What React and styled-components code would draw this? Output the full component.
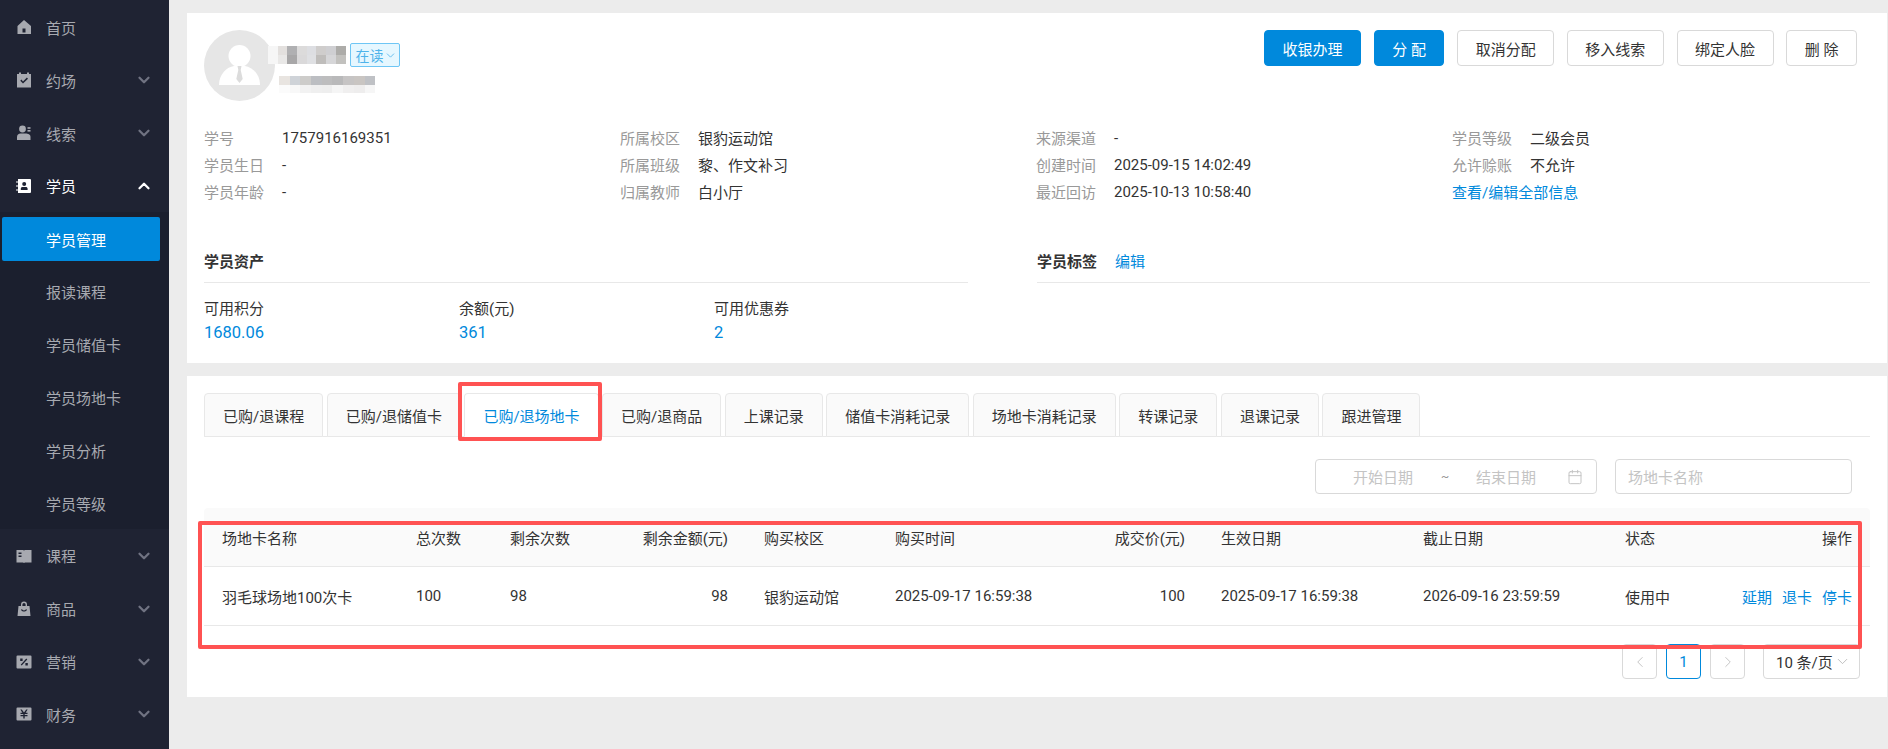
import React from "react";
import styled, { createGlobalStyle } from "styled-components";
import { ChevronDown, ChevronUp, ChevronLeft, ChevronRight, Calendar } from "lucide-react";

const BLUE = "#0089dc";

const GlobalStyle = createGlobalStyle`
  html, body { margin: 0; padding: 0; height: 100%; }
  body {
    background: #ececec;
    color: #333;
    font-family: Roboto, "Noto Sans CJK SC", sans-serif;
    font-size: 15px;
    overflow: hidden;
  }
  * { box-sizing: border-box; }
`;

const HomeIcon = () => (
  <svg width="16" height="16" viewBox="0 0 16 16">
    <path fill="currentColor" fillRule="evenodd" d="M8 1 L15 7 V15 H1.5 V7 Z M6.5 9.5 V13.5 H9.5 V9.5 Z" />
  </svg>
);
const CalendarCheckIcon = () => (
  <svg width="16" height="16" viewBox="0 0 16 16">
    <path fill="currentColor" fillRule="evenodd" d="M3 .5h2v1.5h6V.5h2V2h2v13.5H1V2h2z M4.3 8.7 L7 11.6 L12 6.7 L10.9 5.6 L7 9.4 L5.4 7.6 Z" />
  </svg>
);
const PersonIcon = () => (
  <svg width="16" height="16" viewBox="0 0 16 16">
    <circle cx="6.5" cy="4" r="3.4" fill="currentColor" />
    <path fill="currentColor" d="M1 15v-3c0-2 1.500-3.400 3.500-3.400h5c2.500 0 5 1 5 3.400v3z" />
    <rect x="11.500" y="2.200" width="3" height="1.600" fill="currentColor" />
    <rect x="11.500" y="5" width="3" height="1.600" fill="currentColor" />
  </svg>
);
const ContactIcon = () => (
  <svg width="16" height="16" viewBox="0 0 16 16">
    <path fill="currentColor" fillRule="evenodd" d="M2 1h12a1 1 0 0 1 1 1v12a1 1 0 0 1-1 1H2zM8.200 4a2 2 0 1 0 0 4a2 2 0 0 0 0-4zM4.800 12h6.800v-1.300c0-1-.8-1.700-1.800-1.700H6.600c-1 0-1.800.7-1.800 1.700z" />
    <rect x=".5" y="3" width="1" height="2" fill="currentColor" />
    <rect x=".5" y="7" width="1" height="2" fill="currentColor" />
    <rect x=".5" y="11" width="1" height="2" fill="currentColor" />
  </svg>
);
const BookIcon = () => (
  <svg width="16" height="16" viewBox="0 0 16 16">
    <path fill="currentColor" fillRule="evenodd" d="M.5 2h6.800L8 2.800 8.700 2h6.800v12.500H9L8 15l-1-.5H.5zM2.500 4.500v1.500h3V4.500zM2.500 7.500v1.500h3V7.500z" />
  </svg>
);
const BagIcon = () => (
  <svg width="16" height="16" viewBox="0 0 16 16">
    <path fill="currentColor" fillRule="evenodd" d="M5 5V3.500a3 3 0 0 1 6 0V5h2.500L14.500 15H1.500L2.500 5zM6.400 5h3.200V3.500a1.600 1.600 0 0 0-3.200 0zM5 8.500c.6 2.800 5.400 2.800 6 0l-1.100-.2c-.6 1.500-3.200 1.500-3.800 0z" />
  </svg>
);
const PercentIcon = () => (
  <svg width="16" height="16" viewBox="0 0 16 16">
    <path fill="currentColor" fillRule="evenodd" d="M1.500 1.500h13a1 1 0 0 1 1 1v11a1 1 0 0 1-1 1h-13a1 1 0 0 1-1-1v-11a1 1 0 0 1 1-1zM10.300 4.500L4.700 10.700l1 .9 5.600-6.200zM4.200 4.500v2.400h2.400V4.500zM9.400 9.100v2.400h2.400V9.100z" />
  </svg>
);
const YenIcon = () => (
  <svg width="16" height="16" viewBox="0 0 16 16">
    <path fill="currentColor" fillRule="evenodd" d="M1.500 1.500h13a1 1 0 0 1 1 1v11a1 1 0 0 1-1 1h-13a1 1 0 0 1-1-1v-11a1 1 0 0 1 1-1zM4.300 3.500L6.400 6.800H4.500V8h2.800v1H4.500v1.200h2.800v2.300h1.400v-2.300h2.800V9H8.700V8h2.800V6.800H9.600l2.100-3.300h-1.500L8 6.500 5.800 3.500z" />
  </svg>
);

const menuTop = [
  { label: "首页", icon: <HomeIcon /> },
  { label: "约场", icon: <CalendarCheckIcon />, arrow: true },
  { label: "线索", icon: <PersonIcon />, arrow: true },
];
const subMenu = ["学员管理", "报读课程", "学员储值卡", "学员场地卡", "学员分析", "学员等级"];
const menuBottom = [
  { label: "课程", icon: <BookIcon /> },
  { label: "商品", icon: <BagIcon /> },
  { label: "营销", icon: <PercentIcon /> },
  { label: "财务", icon: <YenIcon /> },
];

const actions = [
  { label: "收银办理", primary: true },
  { label: "分 配", primary: true },
  { label: "取消分配" },
  { label: "移入线索" },
  { label: "绑定人脸" },
  { label: "删 除" },
];

const info = [
  ["学号", "1757916169351"],
  ["所属校区", "银豹运动馆"],
  ["来源渠道", "-"],
  ["学员等级", "二级会员"],
  ["学员生日", "-"],
  ["所属班级", "黎、作文补习"],
  ["创建时间", "2025-09-15 14:02:49"],
  ["允许赊账", "不允许"],
  ["学员年龄", "-"],
  ["归属教师", "白小厅"],
  ["最近回访", "2025-10-13 10:58:40"],
];

const tabs = [
  "已购/退课程",
  "已购/退储值卡",
  "已购/退场地卡",
  "已购/退商品",
  "上课记录",
  "储值卡消耗记录",
  "场地卡消耗记录",
  "转课记录",
  "退课记录",
  "跟进管理",
];

const columns = [
  { title: "场地卡名称", value: "羽毛球场地100次卡" },
  { title: "总次数", value: "100" },
  { title: "剩余次数", value: "98" },
  { title: "剩余金额(元)", value: "98", right: true },
  { title: "购买校区", value: "银豹运动馆" },
  { title: "购买时间", value: "2025-09-17 16:59:38" },
  { title: "成交价(元)", value: "100", right: true },
  { title: "生效日期", value: "2025-09-17 16:59:38" },
  { title: "截止日期", value: "2026-09-16 23:59:59" },
  { title: "状态", value: "使用中" },
];

const nameMosaic = [
  "#f6f6f6", "#e3e0de", "#b0b0b2", "#dcdbdb", "#dddee2", "#cfcdcc", "#cfcfd2", "#adaca9",
  "#f6f6f6", "#e9e8e7", "#a8a7a8", "#dad9da", "#dfe0e3", "#bfbdbb", "#d6d6d8", "#c2c1be",
];
const phoneMosaic = [
  "#e8e4e0", "#cfd3d8", "#cdccca", "#bcbec2", "#bdbdbe", "#b9b9ba", "#c6c4c4", "#c9c5c2", "#bfc1c5",
  "#fbfbfb", "#f8f8f8", "#f2f2f2", "#efefef", "#eeeeee", "#f5f5f5", "#f0efef", "#eeeded", "#f6f6f6",
];

const App = () => {
  return (
    <Page>
      <GlobalStyle />
      <Sidebar>
        {menuTop.map((m) => (
          <MenuItem key={m.label}>
            <MenuIcon>{m.icon}</MenuIcon>
            <MenuLabel>{m.label}</MenuLabel>
            {m.arrow && <ChevronDown size={18} strokeWidth={3} />}
          </MenuItem>
        ))}
        <MenuItem $open>
          <MenuIcon><ContactIcon /></MenuIcon>
          <MenuLabel>学员</MenuLabel>
          <ChevronUp size={18} strokeWidth={3} />
        </MenuItem>
        <SubMenu>
          {subMenu.map((s, i) => (
            <SubItem key={s} $active={i === 0}>
              <SubLabel $active={i === 0}>{s}</SubLabel>
            </SubItem>
          ))}
        </SubMenu>
        {menuBottom.map((m) => (
          <MenuItem key={m.label}>
            <MenuIcon>{m.icon}</MenuIcon>
            <MenuLabel>{m.label}</MenuLabel>
            <ChevronDown size={18} strokeWidth={3} />
          </MenuItem>
        ))}
      </Sidebar>

      <Main>
        <Card>
          <ProfileHead>
            <Profile>
              <Avatar width="71" height="71" viewBox="0 0 71 71">
                <circle cx="35.500" cy="35.500" r="35.500" fill="#e6e6e6" />
                <circle cx="35.500" cy="26" r="11" fill="#fff" />
                <path fill="#fff" d="M15 55c0-11 8-18 15-19h11c7 1 15 8 15 19z" />
                <path fill="#dcdcdc" d="M33.500 36h4l-.8 4 2 9-3.200 4-3.200-4 2-9z" />
              </Avatar>
              <NameBlock>
                <NameRow>
                  <Mosaic $cols={8} $cell={9.7} $rowH={9}>
                    {nameMosaic.map((c, i) => <MosaicCell key={i} $color={c} />)}
                  </Mosaic>
                  <StatusTag>在读<ChevronDown size={13} strokeWidth={1.5} /></StatusTag>
                </NameRow>
                <Mosaic $cols={9} $cell={10.7} $rowH={8.500} $indent={11}>
                  {phoneMosaic.map((c, i) => <MosaicCell key={i} $color={c} />)}
                </Mosaic>
              </NameBlock>
            </Profile>
            <Actions>
              {actions.map((a) => (
                <ActionButton key={a.label} $primary={a.primary}>{a.label}</ActionButton>
              ))}
            </Actions>
          </ProfileHead>

          <InfoGrid>
            {info.map(([label, value]) => (
              <InfoItem key={label}>
                <InfoLabel>{label}</InfoLabel>
                <span>{value}</span>
              </InfoItem>
            ))}
            <InfoLink>查看/编辑全部信息</InfoLink>
          </InfoGrid>

          <Sections>
            <Section>
              <SectionTitle><strong>学员资产</strong></SectionTitle>
              <Assets>
                <div>
                  <AssetLabel>可用积分</AssetLabel>
                  <AssetValue>1680.06</AssetValue>
                </div>
                <div>
                  <AssetLabel>余额(元)</AssetLabel>
                  <AssetValue>361</AssetValue>
                </div>
                <div>
                  <AssetLabel>可用优惠券</AssetLabel>
                  <AssetValue>2</AssetValue>
                </div>
              </Assets>
            </Section>
            <Section>
              <SectionTitle>
                <strong>学员标签</strong>
                <EditLink>编辑</EditLink>
              </SectionTitle>
            </Section>
          </Sections>
        </Card>

        <Card>
          <TabBar>
            {tabs.map((t, i) => (
              <Tab key={t} $active={i === 2}>
                {t}
                {i === 2 && <TabMark />}
              </Tab>
            ))}
          </TabBar>

          <Filters>
            <DateRange>
              <DateText>开始日期</DateText>
              <Tilde>~</Tilde>
              <DateText>结束日期</DateText>
              <Calendar size={16} strokeWidth={1.5} />
            </DateRange>
            <NameInput>场地卡名称</NameInput>
          </Filters>

          <TableWrap>
            <TableHead>
              {columns.map((c) => (
                <Cell key={c.title} $right={c.right}>{c.title}</Cell>
              ))}
              <Cell $right>操作</Cell>
            </TableHead>
            <TableRow>
              {columns.map((c) => (
                <Cell key={c.title} $right={c.right}>{c.value}</Cell>
              ))}
              <OpsCell>
                <a>延期</a>
                <a>退卡</a>
                <a>停卡</a>
              </OpsCell>
            </TableRow>
            <TableMark />
          </TableWrap>

          <Pager>
            <PageButton $muted><ChevronLeft size={18} strokeWidth={1.3} /></PageButton>
            <PageButton $current>1</PageButton>
            <PageButton $muted><ChevronRight size={18} strokeWidth={1.3} /></PageButton>
            <PageSize>10 条/页<ChevronDown size={17} strokeWidth={1.2} /></PageSize>
          </Pager>
        </Card>
      </Main>
    </Page>
  );
};

const Page = styled.div`
  display: flex;
  height: 749px;
  overflow: hidden;
`;

const Sidebar = styled.aside`
  width: 169px;
  flex: none;
  padding-top: 1px;
  background: #1f2333;
  color: #a7a9b0;
`;

const MenuItem = styled.div`
  display: flex;
  align-items: center;
  height: 52.85px;
  padding: 0 16px 0 16px;
  color: ${(p) => (p.$open ? "#fff" : "#a7a9b0")};
  & > svg {
    color: ${(p) => (p.$open ? "#fff" : "#707382")};
  }
`;

const MenuIcon = styled.span`
  display: flex;
  width: 30px;
  color: inherit;
  svg { display: block; }
`;

const MenuLabel = styled.span`
  flex: 1;
`;

const SubMenu = styled.div`
  background: #1b1f2e;
`;

const SubItem = styled.div`
  height: 52.85px;
  padding: ${(p) => (p.$active ? "5px 9px 4px 2px" : "0")};
`;

const SubLabel = styled.div`
  display: flex;
  align-items: center;
  height: 100%;
  padding-left: ${(p) => (p.$active ? "44px" : "46px")};
  border-radius: 2px;
  color: ${(p) => (p.$active ? "#fff" : "#a7a9b0")};
  background: ${(p) => (p.$active ? BLUE : "transparent")};
`;

const Main = styled.main`
  flex: 1;
  min-width: 0;
  padding: 13px 1px 0 18px;
  display: flex;
  flex-direction: column;
  gap: 13px;
`;

const Card = styled.section`
  background: #fff;
  padding: 17px 17px 18px;
`;

const ProfileHead = styled.div`
  display: flex;
  justify-content: space-between;
  align-items: flex-start;
  height: 71px;
  padding-right: 13px;
`;

const Profile = styled.div`
  display: flex;
`;

const Avatar = styled.svg`
  display: block;
  flex: none;
`;

const NameBlock = styled.div`
  margin-left: -7px;
  padding-top: 13px;
  display: flex;
  flex-direction: column;
`;

const NameRow = styled.div`
  display: flex;
  align-items: flex-start;
  gap: 4px;
  height: 30px;
`;

const Mosaic = styled.div`
  display: grid;
  grid-template-columns: repeat(${(p) => p.$cols}, ${(p) => p.$cell}px);
  grid-auto-rows: ${(p) => p.$rowH}px;
  margin-left: ${(p) => p.$indent || 0}px;
  margin-top: 3px;
`;

const MosaicCell = styled.i`
  display: block;
  background: ${(p) => p.$color};
`;

const StatusTag = styled.span`
  display: inline-flex;
  align-items: center;
  height: 24px;
  width: 50px;
  padding-left: 5px;
  border: 1px solid #6ec6f5;
  border-radius: 2px;
  background: #e6f7ff;
  color: #4fb3ea;
  font-size: 14px;
  flex: none;
`;

const Actions = styled.div`
  display: flex;
  gap: 12.7px;
`;

const ActionButton = styled.button`
  height: 36px;
  padding: 0 17.5px;
  border: 1px solid ${(p) => (p.$primary ? BLUE : "#d9d9d9")};
  border-radius: 4px;
  background: ${(p) => (p.$primary ? BLUE : "#fff")};
  color: ${(p) => (p.$primary ? "#fff" : "#333")};
  font: inherit;
`;

const InfoGrid = styled.div`
  display: grid;
  grid-template-columns: repeat(4, 416px);
  grid-auto-rows: 27px;
  margin-top: 23px;
`;

const InfoItem = styled.div`
  display: flex;
  align-items: center;
`;

const InfoLabel = styled.span`
  width: 78px;
  color: #999;
`;

const InfoLink = styled.a`
  display: flex;
  align-items: center;
  color: ${BLUE};
`;

const Sections = styled.div`
  display: grid;
  grid-template-columns: 833px 1fr;
  margin-top: 34px;
`;

const Section = styled.div`
  &:first-child { padding-right: 69px; }
`;

const SectionTitle = styled.div`
  display: flex;
  align-items: center;
  gap: 18px;
  height: 44px;
  border-bottom: 1px solid #e8e8e8;
  strong { font-weight: 700; }
`;

const EditLink = styled.a`
  color: ${BLUE};
`;

const Assets = styled.div`
  display: grid;
  grid-template-columns: repeat(3, 255px);
  padding-top: 14px;
`;

const AssetLabel = styled.div`
  line-height: 24px;
`;

const AssetValue = styled.div`
  line-height: 24px;
  font-size: 16.5px;
  color: ${BLUE};
`;

const TabBar = styled.div`
  display: flex;
  height: 44px;
  border-bottom: 1px solid #e8e8e8;
`;

const Tab = styled.div`
  position: relative;
  display: flex;
  align-items: center;
  height: 44px;
  padding: 0 18px;
  margin-right: 3.5px;
  border: 1px solid #e8e8e8;
  border-bottom-color: ${(p) => (p.$active ? "#fff" : "#e8e8e8")};
  border-radius: 4px 4px 0 0;
  background: ${(p) => (p.$active ? "#fff" : "#fafafa")};
  color: ${(p) => (p.$active ? BLUE : "#333")};
`;

const TabMark = styled.span`
  position: absolute;
  left: -7px;
  right: -4px;
  top: -12px;
  bottom: -5px;
  border: 4px solid #ff5252;
  border-radius: 2px;
`;

const Filters = styled.div`
  display: flex;
  justify-content: flex-end;
  gap: 18px;
  margin-top: 22px;
  padding-right: 18px;
`;

const DateRange = styled.div`
  display: flex;
  align-items: center;
  width: 282px;
  height: 35px;
  padding-left: 37px;
  border: 1px solid #d9d9d9;
  border-radius: 4px;
  color: #c4c4c4;
  svg { margin-left: 30px; }
`;

const DateText = styled.span`
  width: 61px;
  white-space: nowrap;
`;

const Tilde = styled.span`
  width: 62px;
  text-align: center;
  color: #999;
  font-size: 12px;
`;

const NameInput = styled.div`
  display: flex;
  align-items: center;
  width: 237px;
  height: 35px;
  padding-left: 12px;
  border: 1px solid #d9d9d9;
  border-radius: 4px;
  color: #c4c4c4;
`;

const TableWrap = styled.div`
  position: relative;
  margin-top: 14px;
`;

const tableGrid = "194px 94px 130px 124px 131px 183px 143px 202px 202px 113px 150px";

const TableHead = styled.div`
  display: grid;
  grid-template-columns: ${tableGrid};
  height: 59px;
  align-items: center;
  background: #fafafa;
  border-bottom: 1px solid #e8e8e8;
  border-radius: 4px 4px 0 0;
`;

const TableRow = styled.div`
  display: grid;
  grid-template-columns: ${tableGrid};
  height: 59px;
  align-items: center;
  border-bottom: 1px solid #e8e8e8;
`;

const Cell = styled.div`
  padding: 0 18px;
  white-space: nowrap;
  text-align: ${(p) => (p.$right ? "right" : "left")};
`;

const OpsCell = styled.div`
  display: flex;
  justify-content: flex-end;
  gap: 10px;
  padding-right: 18px;
  color: ${BLUE};
`;

const TableMark = styled.span`
  position: absolute;
  left: -6px;
  right: 8px;
  top: 13px;
  bottom: -23px;
  border: 4px solid #ff5252;
  border-radius: 2px;
`;

const Pager = styled.div`
  display: flex;
  justify-content: flex-end;
  margin-top: 18px;
  padding-right: 10px;
`;

const PageButton = styled.div`
  display: flex;
  align-items: center;
  justify-content: center;
  width: 35px;
  height: 35px;
  margin-right: 9px;
  border: 1px solid ${(p) => (p.$current ? BLUE : "#d9d9d9")};
  border-radius: 4px;
  color: ${(p) => (p.$muted ? "#c4c4c4" : BLUE)};
`;

const PageSize = styled.div`
  display: flex;
  align-items: center;
  width: 97px;
  height: 35px;
  margin-left: 9px;
  padding-left: 12px;
  border: 1px solid #d9d9d9;
  border-radius: 4px;
  white-space: nowrap;
  svg { color: #b5b5b5; margin-left: 1px; flex: none; }
`;

export default App;
